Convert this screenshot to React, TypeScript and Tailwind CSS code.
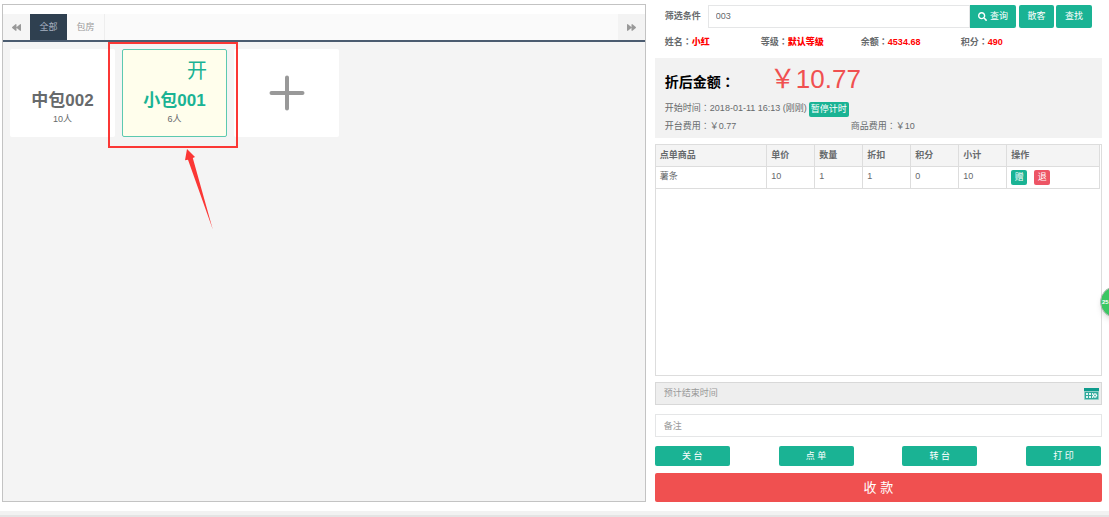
import React from "react";
import { FaBackward, FaForward, FaSearch } from "react-icons/fa";

const columns = [
  { label: "点单商品", width: "w-1/4" },
  { label: "单价", width: "w-12" },
  { label: "数量", width: "w-12" },
  { label: "折扣", width: "w-12" },
  { label: "积分", width: "w-12" },
  { label: "小计", width: "w-12" },
  { label: "操作", width: "" },
];

const rows = [["薯条", "10", "1", "1", "0", "10"]];

const member = [
  { label: "姓名", value: "小红", width: "w-24" },
  { label: "等级", value: "默认等级", width: "w-[100px]" },
  { label: "余额", value: "4534.68", width: "w-[100px]" },
  { label: "积分", value: "490", width: "w-[100px]" },
];

function Colon() {
  return <span className="font-['Noto_Sans_CJK_TC',sans-serif] leading-none">：</span>;
}

function RoomList() {
  return (
    <section className="flex min-w-0 flex-[643] flex-col border border-[#c3c3c3] bg-[#f4f4f4]">
      <div className="h-[9px] bg-white" />
      <nav className="flex h-7 items-stretch border-b-2 border-[#4b5c70] bg-[#fafafa] text-[9px] text-[#999]">
        <button aria-label="上一页" className="flex w-[27px] items-center justify-center bg-[#f5f5f5]">
          <FaBackward size={9} />
        </button>
        <button className="w-[37px] bg-[#2f4050] pt-px text-[#a7b1c2]">全部</button>
        <button className="w-[38px] border-r border-[#eee] pt-px">包房</button>
        <button aria-label="下一页" className="ml-auto flex w-[27px] items-center justify-center bg-[#f3f3f3]">
          <FaForward size={9} />
        </button>
      </nav>
      <div className="flex flex-wrap gap-[7px] p-[7px]">
        <button className="flex h-[88px] w-[105px] flex-col items-center rounded-xs bg-white pt-[42px] text-[#676a6c]">
          <span className="text-[17px] leading-5 font-bold">中包002</span>
          <span className="text-[9px] leading-4">10人</span>
        </button>
        <div className="relative">
          <button className="flex h-[88px] w-[105px] flex-col items-center rounded-xs border border-[#5cc9b0] bg-[#fffeec] pt-[9px] text-[#1ab394]">
            <span className="self-end pr-[19px] text-[20px] leading-6">开</span>
            <span className="mt-2 text-[17px] leading-5 font-bold">小包001</span>
            <span className="text-[9px] leading-4 text-[#676a6c]">6人</span>
          </button>
          <span className="pointer-events-none absolute -top-[7px] -left-[14px] h-[106px] w-[130px] border-2 border-[#fb3735]" />
          <svg className="pointer-events-none absolute top-[98px] left-[62px]" width="32" height="84" viewBox="0 0 32 84" fill="#fb3735">
            <path d="M3 2 L11 10 L8.800 11 L28.800 82.500 L4 12.800 L1 13.300 Z" />
          </svg>
        </div>
        <button aria-label="添加包房" className="flex h-[88px] w-[105px] items-center justify-center rounded-xs bg-white">
          <svg width="36" height="36" viewBox="0 0 36 36" stroke="#999" strokeWidth="4" strokeLinecap="round">
            <path d="M18 2.500V33.500M2.500 18H33.500" />
          </svg>
        </button>
      </div>
    </section>
  );
}

function Filter() {
  return (
    <div className="flex h-[23px] items-stretch px-[10px] text-[9px]">
      <label htmlFor="filter" className="w-[43px] shrink-0 leading-[23px] font-bold">
        筛选条件
      </label>
      <input id="filter" defaultValue="003" className="min-w-0 flex-1 border border-[#e5e6e7] bg-white px-[7px] outline-none" />
      <button className="flex w-[46px] items-center justify-center gap-[3px] rounded-r-xs bg-[#1ab394] text-white">
        <FaSearch size={9} />
        查询
      </button>
      <button className="ml-[3px] w-[35px] rounded-xs bg-[#1ab394] text-white">散客</button>
      <button className="ml-[2px] w-9 rounded-xs bg-[#1ab394] text-white">查找</button>
    </div>
  );
}

function Summary() {
  return (
    <div className="mt-[7px] flex h-20 flex-col bg-[#f2f2f2] px-[10px] text-[9px]">
      <div className="flex h-[41px] items-center">
        <strong className="w-[105px] pt-2 text-[14px] text-black">
          折后金额
          <Colon />
        </strong>
        <span className="text-[26px] leading-10 text-[#f05050]">￥10.77</span>
      </div>
      <div className="flex h-5 items-center gap-[2px]">
        <span>
          开始时间
          <Colon />
          2018-01-11 16:13 (刚刚)
        </span>
        <button className="h-[15px] rounded-xs bg-[#1ab394] px-[2px] leading-[15px] text-white">暂停计时</button>
      </div>
      <div className="flex h-4 items-center">
        <span className="w-[186px]">
          开台费用
          <Colon />
          ￥0.77
        </span>
        <span>
          商品费用
          <Colon />
          ￥10
        </span>
      </div>
    </div>
  );
}

function Orders() {
  return (
    <div className="mt-[6px] min-h-32 flex-1 border border-[#ddd] bg-white pr-px">
      <table className="w-full table-fixed border-collapse text-left text-[9px]">
        <thead>
          <tr className="h-[21px] bg-[#f4f4f4]">
            {columns.map((c) => (
              <th key={c.label} className={`${c.width} border-r border-b border-[#ddd] px-1 font-bold`}>
                {c.label}
              </th>
            ))}
          </tr>
        </thead>
        <tbody>
          {rows.map((row) => (
            <tr key={row[0]} className="h-[22px]">
              {row.map((cell, i) => (
                <td key={i} className="border-r border-b border-[#ddd] px-1">
                  {cell}
                </td>
              ))}
              <td className="border-r border-b border-[#ddd] px-1">
                <div className="flex gap-[7px]">
                  <button className="h-[15px] w-4 rounded-xs bg-[#1ab394] leading-[15px] text-white">赠</button>
                  <button className="h-[15px] w-4 rounded-xs bg-[#ed5565] leading-[15px] text-white">退</button>
                </div>
              </td>
            </tr>
          ))}
        </tbody>
      </table>
    </div>
  );
}

function CalendarIcon() {
  return (
    <svg width="15" height="12" viewBox="0 0 15 12">
      <rect width="15" height="12" rx="1" fill="#8fd0c8" />
      <rect width="15" height="3" fill="#0d9b8c" />
      <rect x="1" y="4" width="13" height="7" fill="#2fa99c" />
      <path d="M2 5h2v2H2zM5 5h2v2H5zM8 5h1v2H8zM2 8h2v2H2zM5 8h2v2H5zM8 8h1v2H8z" fill="#e4f5f2" />
      <circle cx="11" cy="7.500" r="2.200" fill="#fff" />
      <path d="M10 6.500l2 2M12 6.500l-2 2" stroke="#2fa99c" fill="none" />
    </svg>
  );
}

function Checkout() {
  return (
    <section className="flex min-w-0 flex-[448] flex-col pt-px">
      <Filter />
      <div className="mt-[7px] flex h-4 items-center pl-[10px] text-[9px]">
        {member.map((m) => (
          <span key={m.label} className={`${m.width} font-bold`}>
            {m.label}
            <Colon />
            <b className="text-[#f00]">{m.value}</b>
          </span>
        ))}
      </div>
      <Summary />
      <Orders />
      <div className="mt-[6px] flex h-[23px] items-center border border-[#d8d8d8] bg-[#eee] pr-[2px]">
        <input aria-label="预计结束时间" placeholder="预计结束时间" className="min-w-0 flex-1 bg-transparent px-2 text-[9px] outline-none placeholder:text-[#999]" />
        <button aria-label="选择时间">
          <CalendarIcon />
        </button>
      </div>
      <input aria-label="备注" placeholder="备注" className="mt-[9px] h-[23px] border border-[#e5e6e7] bg-white px-2 text-[9px] outline-none placeholder:text-[#999]" />
      <div className="mt-[9px] flex justify-between pr-px text-[9px] text-white">
        {["关 台", "点 单", "转 台", "打 印"].map((t) => (
          <button key={t} className="h-5 w-[75px] rounded-xs bg-[#1ab394] pt-px">
            {t}
          </button>
        ))}
      </div>
      <button className="mt-[7px] h-[29px] rounded-xs bg-[#f05050] text-[13px] text-white">收 款</button>
    </section>
  );
}

export default function App() {
  return (
    <div className="relative flex min-h-screen flex-col overflow-hidden bg-white font-['Liberation_Sans','Noto_Sans_CJK_SC',sans-serif] text-[#676a6c]">
      <main className="flex flex-1 gap-[9px] pt-1 pr-[7px] pb-[9px] pl-[2px]">
        <RoomList />
        <Checkout />
      </main>
      <footer className="h-[6px] border-b-2 border-[#e4e4e4] bg-[#f2f2f2]" />
      <div className="absolute top-[286px] -right-[23px] flex h-8 w-8 items-center rounded-full border border-[#bbb] bg-[#3cc763] pl-px text-[6px] font-bold text-white shadow-md">
        25
      </div>
    </div>
  );
}
